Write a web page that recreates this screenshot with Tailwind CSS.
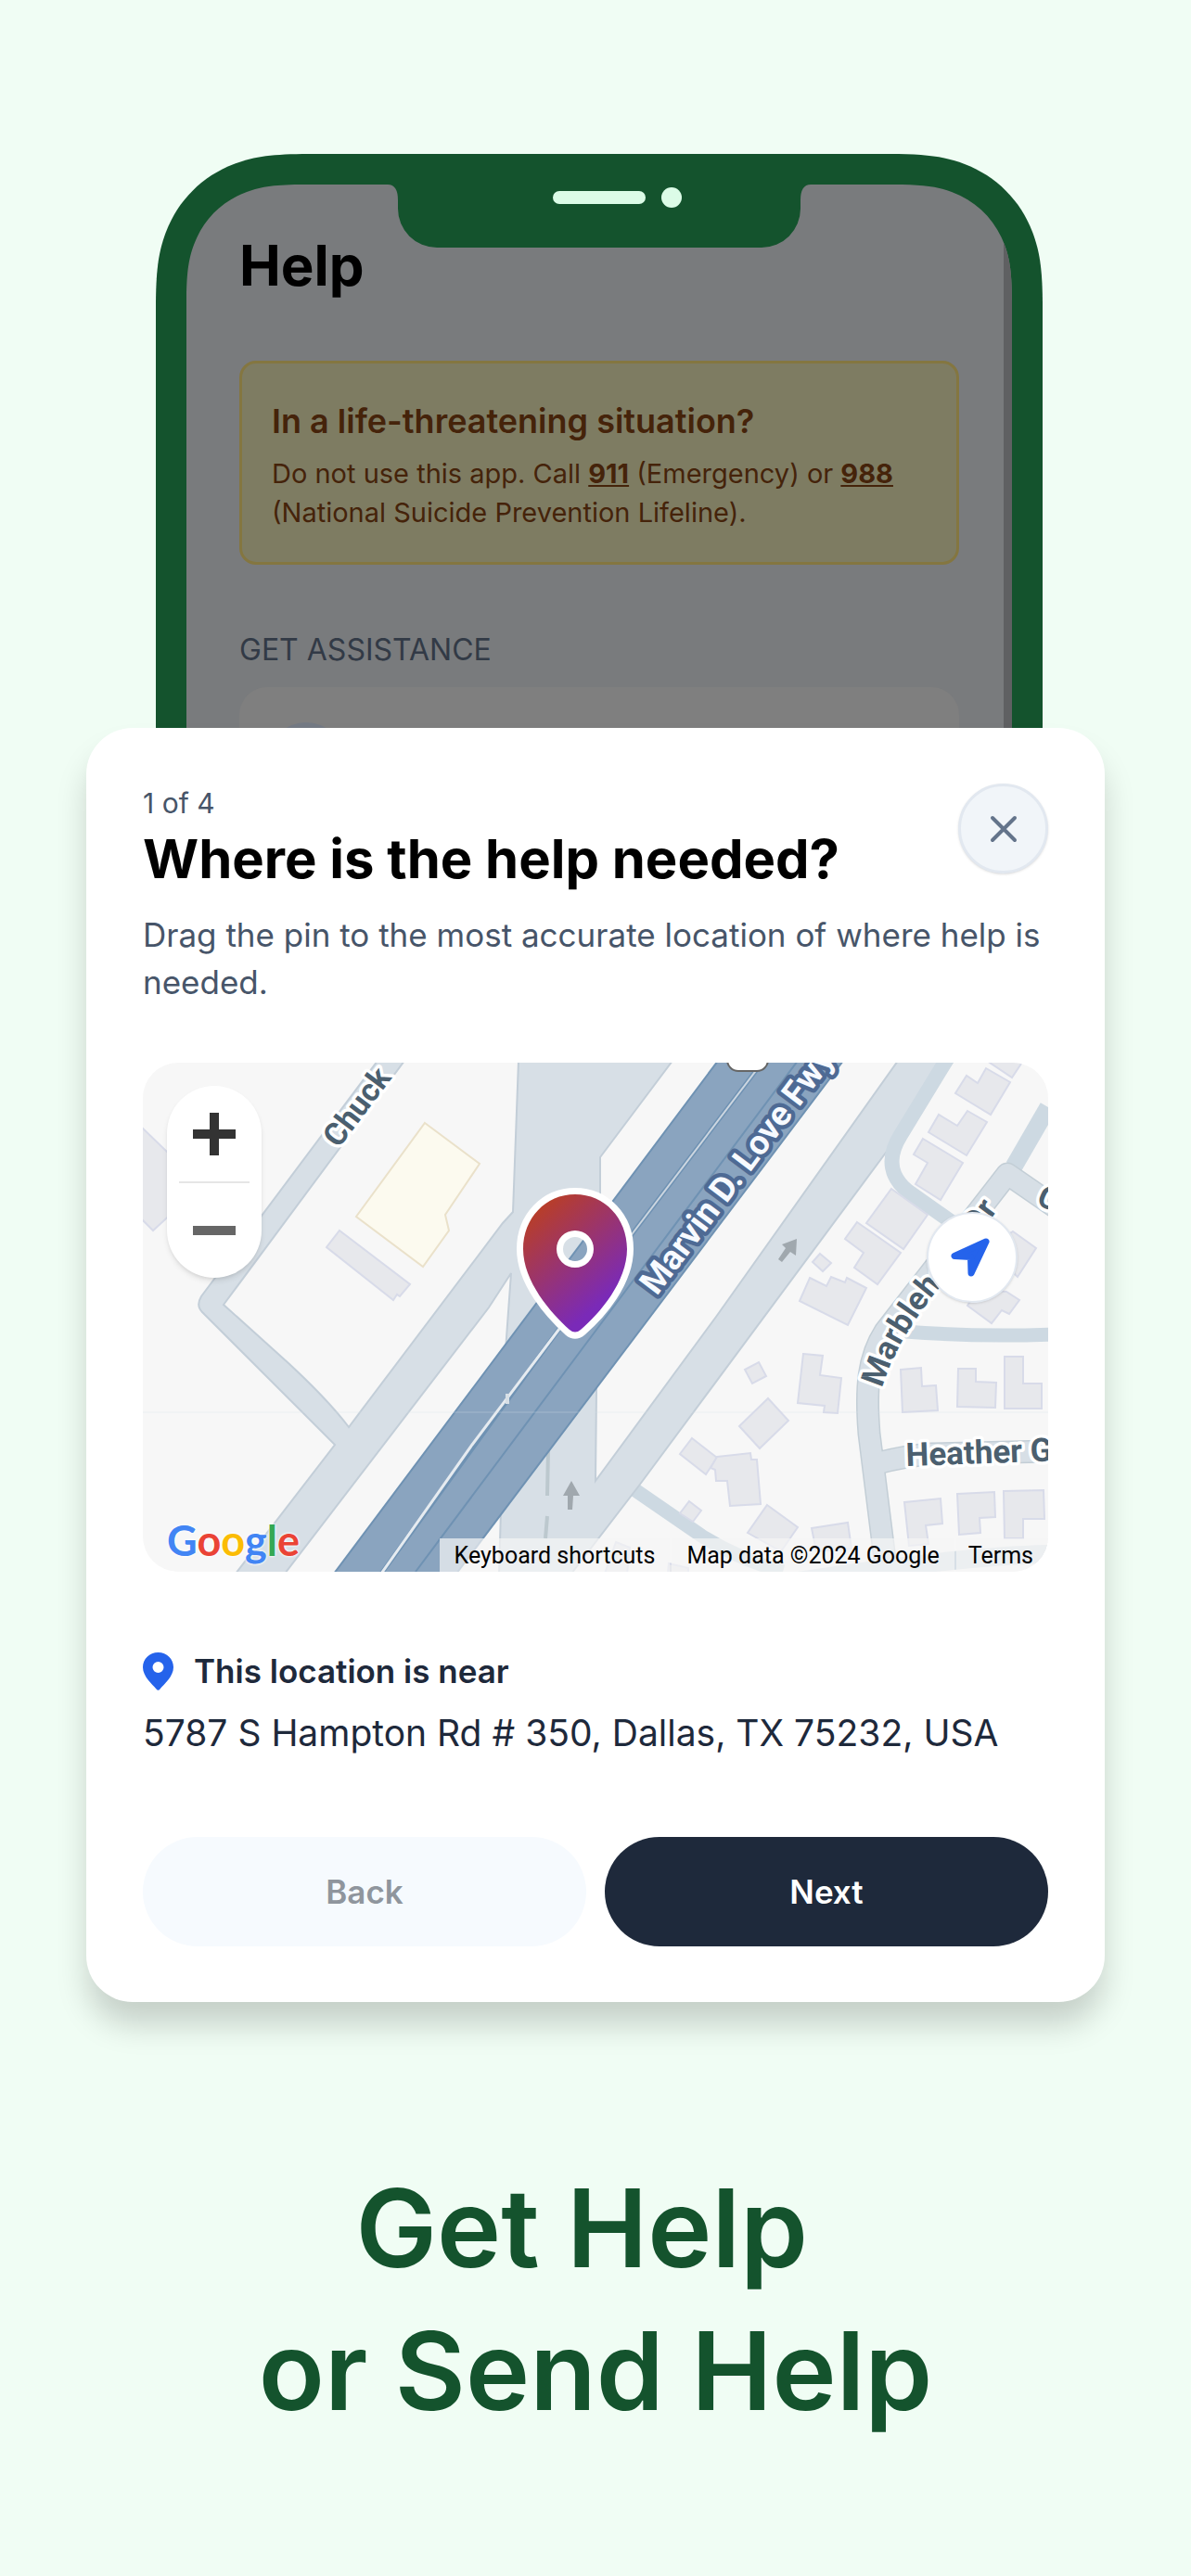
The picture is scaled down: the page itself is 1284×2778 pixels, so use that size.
<!DOCTYPE html>
<html lang="en">
<head>
    <meta charset="UTF-8">
    <meta name="viewport" content="width=device-width, initial-scale=1.0">
    <title>Get Help or Send Help</title>
    <script src="https://cdn.jsdelivr.net/npm/@tailwindcss/browser@4"></script>
</head>

<body class="min-h-screen bg-[#f0fdf4] font-['Inter',sans-serif]">

    <!-- Phone -->
    <section class="flex justify-center pt-[166px] pl-2">
        <div class="relative w-[956px] h-[619px] overflow-hidden px-[90px] pt-[84px]">
            <svg class="absolute inset-0 w-full h-full" viewBox="0 0 956 619" aria-hidden="true">
                <defs>
                    <clipPath id="screen">
                        <path d="M33 640V160C33 130 35 114 41 98C51 71 71 51 98 41C114 35 130 33 160 33H796C826 33 842 35 858 41C885 51 905 71 915 98C921 114 923 130 923 160V640Z" />
                    </clipPath>
                </defs>
                <path fill="#14532d" d="M0 640V165C0 125 3 105 11 84C24 50 50 24 84 11C105 3 125 0 165 0H791C831 0 851 3 872 11C906 24 932 50 945 84C953 105 956 125 956 165V640Z" />
                <g clip-path="url(#screen)">
                    <rect width="956" height="640" fill="#797b7d" />
                    <rect x="914" width="12" height="640" fill="#5f6062" />
                </g>
                <path fill="#14532d" d="M250 30V33Q261 33 261 50V59A42 42 0 0 0 303 101H653A42 42 0 0 0 695 59V50Q695 33 706 33V30Z" />
                <rect x="428" y="40" width="100" height="14" rx="7" fill="#dcfce7" />
                <circle cx="556" cy="47" r="11" fill="#dcfce7" />
            </svg>

            <div class="relative">
                <h2 class="text-[60px] leading-[72px] font-bold text-black">Help</h2>

                <div class="mt-[67px] rounded-[18px] border-3 border-[#847640] bg-[#7e7c62] px-8 pt-[38px] pb-8 text-[#45230a]">
                    <h3 class="text-[36px] leading-[48px] font-semibold">In a life-threatening situation?</h3>
                    <p class="mt-3 text-[29px] leading-[42px]">
                        Do not use this app. Call <a href="tel:911" class="font-bold underline">911</a> (Emergency) or <a href="tel:988" class="font-bold underline">988</a><br>
                        (National Suicide Prevention Lifeline).
                    </p>
                </div>

                <h3 class="mt-[68px] text-[32px] leading-[48px] text-[#323a46]">GET ASSISTANCE</h3>
                <div class="mt-4 h-40 rounded-[30px] bg-[#7f7f7f] px-8 pt-[38px]">
                    <div class="size-20 rounded-full bg-[#747a84]"></div>
                </div>
            </div>
        </div>
    </section>

    <!-- Location dialog -->
    <section role="dialog" aria-labelledby="dialog-title" class="relative mx-[93px] rounded-[50px] bg-white px-[61px] py-[60px] shadow-[0_26px_34px_-2px_rgb(0_0_0/0.18)]">
        <div class="flex justify-between">
            <div>
                <p class="text-[30px] leading-[42px] text-[#475569]">1 of 4</p>
                <h1 id="dialog-title" class="mt-1 text-[58px] leading-[70px] font-bold text-black">Where is the help needed?</h1>
            </div>
            <button type="button" aria-label="Close" class="flex size-[97px] shrink-0 items-center justify-center rounded-full border-3 border-[#e2e8f0] bg-[#f1f5f9] text-[#64748b] shadow-sm">
                <svg class="size-8" viewBox="0 0 32 32" fill="none" stroke="currentColor" stroke-width="4" stroke-linecap="round"><path d="M4 4L28 28M28 4L4 28" /></svg>
            </button>
        </div>
        <p class="mt-[22px] text-[35px] leading-[51px] text-[#475569]">Drag the pin to the most accurate location of where help is needed.</p>

        <!-- Map -->
        <div class="relative mt-[61px] h-[549px] overflow-hidden rounded-[38px] bg-[#f7f7f7]">
            <svg class="absolute inset-0 h-full w-full" viewBox="0 0 976 549" preserveAspectRatio="xMidYMid slice" role="img" aria-label="Map">
                <defs>
                    <linearGradient id="pin" x1="0.15" y1="0.08" x2="0.65" y2="0.85">
                        <stop offset="0" stop-color="#b93e26" />
                        <stop offset="1" stop-color="#7a2ab8" />
                    </linearGradient>
                    <path id="marble" d="M797 351Q812 300 857 245L934 142" />
                </defs>

                <!-- residential streets -->
                <g fill="none" stroke="#cdd9e2" stroke-width="15">
                    <path d="M822 290Q900 296 980 293" />
                    <path d="M528 459L602 510Q640 534 690 549" />
                    <path d="M976 48L939 112" stroke-width="19" />
                </g>
                <g fill="none" stroke-linejoin="round">
                    <path d="M803 560L783 400C779 350 782 318 800 290L932 120L990 160M792 432Q822 424 850 422L980 419" stroke="#c3ced6" stroke-width="25" />
                    <path d="M803 560L783 400C779 350 782 318 800 290L932 120L990 160M792 432Q822 424 850 422L980 419" stroke="#d7dfe6" stroke-width="22" />
                    <path d="M700 560Q880 532 976 530" stroke="#d7dfe6" stroke-width="20" />
                </g>

                <!-- side roads -->
                <g fill="#d7dfe6" stroke="#c3ced8" stroke-width="2">
                    <path d="M253 -2L63 252Q57 262 64 269L207 412L100 551H153L373 264L397 227L391 310L384 551H462L535 456L801 97L874 -2H814L618 274L488 451L489 354L493 141V102L571 -2H405L399 161L388 173L222 393Q200 364 158 325L87 261L282 -2Z" />
                </g>
                <path d="M867 -4L817 78C800 105 808 125 824 138L875 174" fill="none" stroke="#cdd9e2" stroke-width="16" />
                <path d="M437 417L436 467M436 489L434 513" stroke="#bcc8ce" stroke-width="4" />

                <!-- freeway -->
                <path d="M620 -2L206 551H338L755 -2Z" fill="#8aa4bf" stroke="#6f92b3" stroke-width="2" />
                <path d="M706 -2L486 292L294 549" fill="none" stroke="#6f92b3" stroke-width="2" />
                <path d="M669 -2L528 184L449 287L257 551" fill="none" stroke="#6f92b3" stroke-width="5" />
                <path d="M669 -2L528 184L449 287" fill="none" stroke="#ccd6e0" stroke-width="2" />
                <path d="M449 287L355 412L257 551" fill="none" stroke="#e6ebf0" stroke-width="3" />
                <rect x="391" y="357" width="4" height="11" fill="#d7dfe6" />
                <path d="M0 377H976" stroke="#d7dfe6" stroke-opacity="0.35" />

                <!-- buildings -->
                <path d="M304 65L363 109L326 164L330 181L302 220L230 166Z" fill="#fcfaef" stroke="#eae1ca" stroke-width="2" />
                <g fill="#e7e8ec" stroke="#d8dbe9" stroke-width="2">
                    <path d="M212 181L288 239L277 252L274 250L270 256L198 199Z" />
                    <path d="M-2 69L30 100L50 125L35 159L11 181L-2 168Z" />
                    <path d="M909 6L935 21L914 56L876 33L888 14L900 22Z" />
                    <path d="M910 -2H949L937 16Z" />
                    <path d="M889 52L910 64L888 100L847 75L858 56L878 68Z" />
                    <path d="M841 82L884 108L860 148L833 131L846 108L831 99Z" />
                    <path d="M807 136L846 164L820 201L780 173Z" />
                    <path d="M770 172L817 205L792 239L767 221L777 205L757 190Z" />
                    <path d="M730 206L742 216L733 225L722 215Z" />
                    <path d="M719 232L737 241L742 231L757 237L759 232L780 243L760 283L708 257Z" />
                    <path d="M938 182L963 200L943 231L910 200Z" />
                    <path d="M889 262L915 281L926 267L934 271L945 256L931 247L900 245Z" />
                    <path d="M664 323L672 338L657 346L649 331Z" />
                    <path d="M712 314L733 316L730 337L753 340L749 378L734 377L735 370L706 367Z" />
                    <path d="M674 362L696 386L665 416L643 392Z" />
                    <path d="M592 405L619 426L607 444L579 422Z" />
                    <path d="M619 425L655 421L656 428H662L666 476L633 478L630 451H618L617 439L612 437Z" />
                    <path d="M589 473L602 483L593 495L579 486Z" />
                    <path d="M673 477L706 501L688 527L652 507Z" />
                    <path d="M721 502L760 496L764 524L726 527Z" />
                    <path d="M817 331L839 329L840 349L855 348L857 375L819 377Z" />
                    <path d="M879 330H898V344L920 345L919 372L878 371Z" />
                    <path d="M929 317H949V346H969V373H929Z" />
                    <path d="M821 474L860 470L862 497L844 499L847 519L826 521Z" />
                    <path d="M878 465L918 463L919 490L902 491L903 507L880 509Z" />
                    <path d="M928 462L971 461L972 492H949V513H929Z" />
                    <path d="M510 517L525 523L522 551H498Z" />
                    <path d="M567 540L588 545V551H566Z" />
                </g>

                <!-- one-way arrows -->
                <g fill="#a0a8ae">
                    <path d="M705 190L704 208L698 204L689 215L685 212L693 200L689 196Z" />
                    <path d="M462 451L471 467H464L463 482H458V467H453Z" />
                </g>

                <!-- road names -->
                <rect x="630" y="-30" width="44" height="39" rx="12" fill="#fff" stroke="#666" stroke-width="2" />
                <g font-family="Roboto, sans-serif" font-weight="700" stroke-linejoin="round" paint-order="stroke">
                    <text transform="translate(211 93) rotate(-53)" font-size="34" fill="#4b5f6f" stroke="#fff" stroke-width="7">Chuck</text>
                    <text transform="translate(554 252) rotate(-53)" font-size="37" fill="#f7faff" stroke="#4e6a94" stroke-width="9">Marvin D. Love Fwy</text>
                    <text font-size="35" fill="#4b5f6f" stroke="#fff" stroke-width="7"><textPath href="#marble">Marblehead Dr</textPath></text>
                    <text transform="translate(823 435) rotate(-2)" font-size="35" fill="#4b5f6f" stroke="#fff" stroke-width="7">Heather Glen Dr</text>
                    <text transform="translate(962 152) rotate(25)" font-size="34" fill="#4b5f6f" stroke="#fff" stroke-width="7">C</text>
                </g>

                <!-- location pin -->
                <path fill="url(#pin)" fill-rule="evenodd" stroke="#fff" stroke-width="14" stroke-linejoin="round" paint-order="stroke"
                    d="M466 142C434 142 410 168 410 201C410 236 440 270 460 288Q466 293 472 288C493 270 522 236 522 201C522 168 498 142 466 142ZM466 181A20 20 0 1 1 466 221A20 20 0 1 1 466 181Z" />
            </svg>

            <div class="absolute top-[25px] left-[26px] flex w-[102px] flex-col items-center rounded-full bg-white shadow-md">
                <button type="button" aria-label="Zoom in" class="flex h-[103px] w-full items-center justify-center text-[#333]">
                    <svg class="size-[46px]" viewBox="0 0 46 46" fill="currentColor"><path d="M18 0H28V18H46V28H28V46H18V28H0V18H18Z" /></svg>
                </button>
                <div class="h-[2px] w-[76px] bg-[#e6e6e6]"></div>
                <button type="button" aria-label="Zoom out" class="flex h-[102px] w-full items-center justify-center text-[#666]">
                    <svg class="size-[46px]" viewBox="0 0 46 46" fill="currentColor"><path d="M0 18H46V28H0Z" /></svg>
                </button>
            </div>

            <button type="button" aria-label="Use my location" class="absolute top-[161px] right-[33px] flex size-[98px] items-center justify-center rounded-full border-2 border-[#e2e8f0] bg-white pr-1 text-[#2563eb] shadow-sm">
                <svg class="size-[42px]" viewBox="0 0 42 42" fill="currentColor" stroke="currentColor" stroke-width="7" stroke-linejoin="round"><path d="M38 4L4 19.500L21.500 20.500L22 38Z" /></svg>
            </button>

            <a href="#" aria-label="Google" class="absolute bottom-1 left-[26px] font-['Lato',sans-serif] text-[45px] leading-[60px] font-bold [text-shadow:0_0_3px_#fff,0_0_3px_#fff]"><span class="text-[#4285f4]">G</span><span class="text-[#ea4335]">o</span><span class="text-[#fbbc04]">o</span><span class="text-[#4285f4]">g</span><span class="text-[#34a853]">l</span><span class="text-[#ea4335]">e</span></a>

            <div class="absolute right-0 bottom-0 flex h-9 gap-[2px] font-['Roboto',sans-serif] text-[25px] leading-[38px] text-black">
                <button type="button" class="bg-[#f5f5f5]/70 pr-4 pl-4">Keyboard shortcuts</button>
                <span class="bg-[#f5f5f5]/70 px-4">Map data ©2024 Google</span>
                <a href="#" class="bg-[#f5f5f5]/70 pr-4 pl-[13px]">Terms</a>
            </div>
        </div>

        <div class="mt-[83px] flex items-center gap-[22px]">
            <svg class="h-[41px] w-[33px] text-[#2563eb]" viewBox="0 0 33 41" fill="currentColor" aria-hidden="true">
                <path fill-rule="evenodd" d="M16.500 0C7 0 0 7 0 16C0 26 10 34 14.500 39.500Q16.500 42 18.500 39.500C23 34 33 26 33 16C33 7 26 0 16.500 0ZM16.500 10A6 6 0 1 1 16.500 22A6 6 0 1 1 16.500 10Z" />
            </svg>
            <h2 class="text-[35px] leading-[48px] font-semibold text-[#1e293b]">This location is near</h2>
        </div>
        <p class="mt-[15px] text-[39px] leading-[56px] text-[#1e293b]">5787 S Hampton Rd # 350, Dallas, TX 75232, USA</p>

        <div class="mt-[84px] grid grid-cols-2 gap-5 text-[35px] font-semibold">
            <button type="button" class="h-[118px] rounded-full bg-[#f6fafe] text-[#8f959d]">Back</button>
            <button type="button" class="h-[118px] rounded-full bg-[#1e293b] text-white">Next</button>
        </div>
    </section>

    <p class="mt-[167px] text-center text-[117px] leading-[154px] font-semibold text-[#14532d]">Get Help&nbsp;<br>or Send Help</p>

</body>
</html>
